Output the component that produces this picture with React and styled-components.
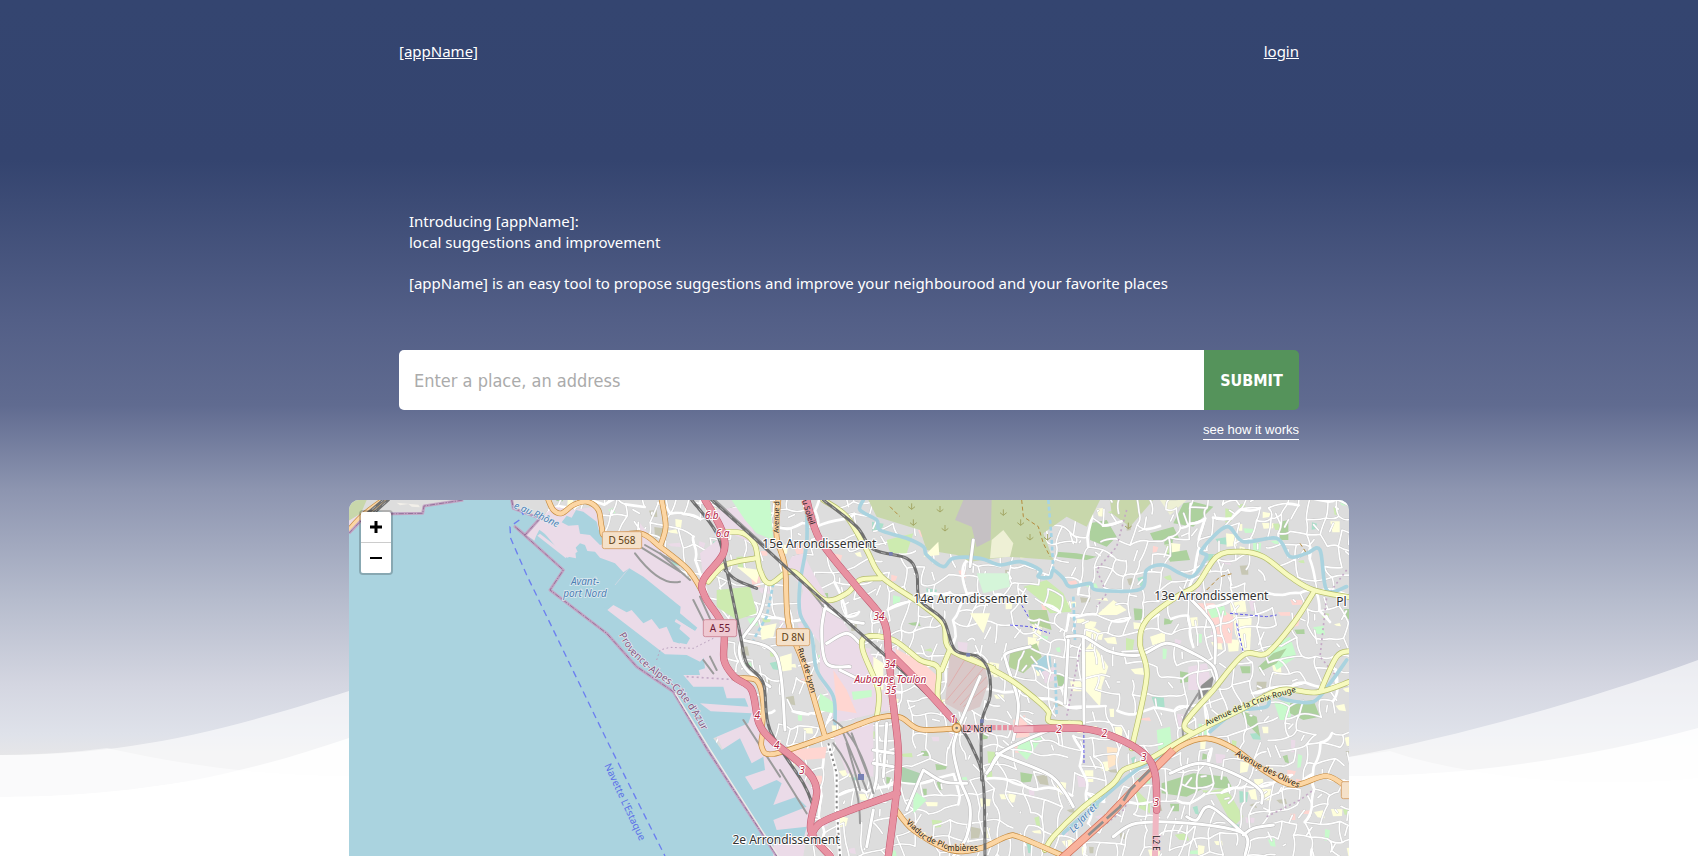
import React from "react";
import styled, { createGlobalStyle } from "styled-components";

const GlobalStyle = createGlobalStyle`
  *, *::before, *::after { box-sizing: border-box; }
  body { margin: 0; background: #fff; }
`;

const sans = `"Noto Sans", "Open Sans", sans-serif`;

const Page = styled.div`
  position: relative;
  display: flex;
  flex-direction: column;
  height: 100vh;
  min-height: 620px;
  overflow: hidden;
  color: #fff;
  font: 15px/21px ${sans};
  background: linear-gradient(
    #344570 0, #34446f 160px, #535f87 320px, #606b90 405px, #8d95b0 490px,
    #b6bccd 600px, #d4d6e1 685px, #dfe2ea 735px, #e6e6e8 755px
  );
`;

const Waves = styled.svg`
  position: absolute;
  inset: 0;
  width: 100%;
  height: 100%;
`;

const Content = styled.div`
  position: relative;
  display: flex;
  flex-direction: column;
  width: 100%;
  max-width: 900px;
  margin: 0 auto;
`;

const Nav = styled.nav`
  display: flex;
  justify-content: space-between;
  padding: 41px 0;
`;

const NavLink = styled.a`
  color: #fff;
  text-decoration: underline;
`;

const Intro = styled.section`
  padding: 108px 10px 56px;
`;

const IntroText = styled.p`
  margin: 0 0 ${(p) => (p.$spaced ? "20px" : "0")};
`;

const SearchForm = styled.form`
  display: flex;
  height: 60px;
  border-radius: 5px;
  overflow: hidden;
`;

const SearchInput = styled.input`
  flex: 1;
  min-width: 0;
  padding: 0 15px;
  border: 0;
  outline: 0;
  background: #fff;
  color: #333;
  font: 18px "DejaVu Sans Condensed", "Open Sans", sans-serif;
  &::placeholder { color: #ababab; opacity: 1; }
`;

const SubmitButton = styled.button`
  width: 95px;
  padding: 0;
  border: 0;
  background: #55935b;
  color: #fff;
  font: bold 16px "DejaVu Sans Condensed", "Open Sans", sans-serif;
`;

const HelpLink = styled.a`
  align-self: flex-end;
  margin: 10px 0 60px;
  border-bottom: 1px solid #fff;
  color: #fff;
  font: 13px/19px "Liberation Sans", Arial, sans-serif;
  text-decoration: none;
`;

const MapFrame = styled.section`
  position: relative;
  flex: 1;
  min-height: 0;
  width: 100%;
  max-width: 1000px;
  margin: 0 auto;
  border-radius: 10px 10px 0 0;
  overflow: hidden;
  background: #aad3df;
`;

const MapDrawing = styled.svg`
  display: block;
  width: 100%;
  height: 100%;
  font-family: "Noto Sans", "Open Sans", sans-serif;
`;

const ZoomControl = styled.div`
  position: absolute;
  top: 10px;
  left: 10px;
  display: flex;
  flex-direction: column;
  border: 2px solid rgba(0, 0, 0, 0.2);
  border-radius: 4px;
  background-clip: padding-box;
`;

const ZoomButton = styled.button`
  display: grid;
  place-items: center;
  width: 30px;
  height: ${(p) => (p.$divided ? "31px" : "30px")};
  padding: 0;
  border: 0;
  border-bottom: ${(p) => (p.$divided ? "1px solid #ccc" : "0")};
  border-radius: ${(p) => (p.$divided ? "2px 2px 0 0" : "0 0 2px 2px")};
  background: #fff;
`;

/* ---------- map data: three sheets side by side, 3 units per pixel ---------- */

const SHEET = { west: 0, mid: 960, east: 1920 };

function seeded(seed) {
  let s = seed;
  return () => {
    s = (s * 1664525 + 1013904223) % 4294967296;
    return s / 4294967296;
  };
}

function buildStreets() {
  const rand = seeded(42);
  const cell = 46;
  const cols = 56;
  const rows = 26;
  const pts = [];
  for (let r = 0; r <= rows; r++) {
    const row = [];
    for (let c = 0; c <= cols; c++) {
      const x = 600 + c * cell;
      const y = r * cell - 20;
      row.push([
        Math.round(x + 40 * Math.sin(y / 140 + x / 300) + (rand() - 0.5) * 26),
        Math.round(y + 40 * Math.sin(x / 170) + (rand() - 0.5) * 26),
      ]);
    }
    pts.push(row);
  }
  let thin = "";
  let wide = "";
  const patches = [];
  const colors = ["#ffffdc", "#ffffdc", "#ffffdc", "#cdebb0", "#c8facc", "#add19e", "#ffd6d1", "#aae0cb", "#c7c7b4", "#ebdbe8"];
  const edge = (a, b) => {
    const mx = Math.round((a[0] + b[0]) / 2 + (rand() - 0.5) * 24);
    const my = Math.round((a[1] + b[1]) / 2 + (rand() - 0.5) * 24);
    return `M${a[0]} ${a[1]}Q${mx} ${my} ${b[0]} ${b[1]}`;
  };
  for (let r = 0; r < rows; r++) {
    for (let c = 0; c < cols; c++) {
      const p = pts[r][c];
      if (rand() < 0.62) thin += edge(p, pts[r][c + 1]);
      if (rand() < 0.62) thin += edge(p, pts[r + 1][c]);
      if (r % 6 === 2 && rand() < 0.6) wide += edge(p, pts[r][c + 1]);
      if (c % 8 === 3 && rand() < 0.6) wide += edge(p, pts[r + 1][c]);
      if (rand() < 0.3) {
        const a = p[0] + 22;
        const b = p[1] + 16;
        thin += `M${a} ${b}l${Math.round(rand() * 40 - 20)} ${Math.round(rand() * 40)}`;
      }
      if (rand() < 0.3) {
        const w = 12 + rand() * 26;
        const h = 10 + rand() * 26;
        const k = rand() * 14 - 7;
        const x = p[0] + 6 + rand() * 12;
        const y = p[1] + 6 + rand() * 12;
        patches.push({
          d: `M${x | 0} ${y | 0}l${w | 0} ${k | 0}l${-k | 0} ${h | 0}l${(-w * 0.8) | 0} ${(k * 0.6) | 0}Z`,
          fill: colors[Math.floor(rand() * colors.length)],
        });
      }
    }
  }
  return { thin, wide, patches };
}

const STREETS = buildStreets();

/* Rounds the corners of a polyline path into smooth curves. */
function smooth(d) {
  if (/[QHV]/.test(d)) return d;
  return d
    .split("M")
    .filter(Boolean)
    .map((part) => {
      const p = part.split("L").map((s) => s.trim().split(" ").map(Number));
      let out = `M${p[0][0]} ${p[0][1]}`;
      for (let i = 0; i < p.length - 1; i++) {
        const a = p[i - 1] || p[i];
        const b = p[i];
        const c = p[i + 1];
        const e = p[i + 2] || c;
        out += `C${b[0] + (c[0] - a[0]) / 6} ${b[1] + (c[1] - a[1]) / 6} ${c[0] - (e[0] - b[0]) / 6} ${c[1] - (e[1] - b[1]) / 6} ${c[0]} ${c[1]}`;
      }
      return out;
    })
    .join("");
}

const SEA =
  "M27 130L60 95L100 62L130 66L250 68L250 48L300 42L360 30L515 30L518 55L560 66L600 85L560 130L590 160L675 205L680 196L600 132L615 118L700 170L703 190L715 195L726 172L745 160L780 195L830 215L870 235L940 280L1020 350L1035 350L1060 375L1075 405L1065 425L1000 395L1000 440L1020 460L1010 490L1090 490L1095 535L1030 555L1060 590L1150 590L1160 625L1215 625L1225 650L1080 640L1112 664L1235 670L1225 700L1120 745L1145 780L1200 745L1235 820L1270 800L1275 840L1215 860L1240 900L1310 870L1325 880L1300 945L1370 920L1400 950L1300 990L1310 1020L1400 1010L1390 1050L1300 1060L1300 1098L27 1098Z";

const AREAS = [
  ["west", "#c8d7ab", "M27 30H80L62 72L27 92Z"],
  ["west", "#ebdbe8", "M27 92L60 72L70 88L27 130Z"],
  ["west", "#f2efe9", "M170 38L235 44L240 52L215 50L205 42L180 46Z"],
  ["west", "#ebdbe8", "M595 92L640 50L700 60L760 50L800 130L900 180L1060 270L1200 600L1080 700L980 420L870 235L740 160L650 130L560 132Z"],
  ["mid", "#ebdbe8", "M-60 100L60 250L120 310L190 420L190 520L290 620L290 700L460 900L430 1098L340 1098L180 760L60 560L-60 280Z"],
  ["mid", "#ebdbe8", "M160 60L250 50L300 170L190 120ZM120 190L185 140L190 190L130 260Z"],
  ["mid", "#ebdbe8", "M395 200L430 190L460 250L500 320L580 440L660 520L690 660L520 700L510 620L480 570L480 460L410 370L430 300L380 230Z"],
  ["mid", "#ebdbe8", "M520 740L640 700L640 860L560 850Z"],
  ["mid", "#c8facc", "M215 30H330L340 150L290 130L255 90ZM480 610L525 640L520 670L475 660Z"],
  ["mid", "#c8d7ab", "M625 30H1320L1280 110L1220 80L1150 130L1180 210L1040 200L930 215L890 195L800 180L780 120L650 80Z"],
  ["mid", "#c5c0c3", "M910 30H995L992 150L950 172L935 110L885 90Z"],
  ["mid", "#eef0d5", "M1030 120L1060 160L1050 200L990 205L995 150Z"],
  ["mid", "#cdebb0", "M170 300L270 290L290 370L230 390L170 350ZM680 150L760 130L740 190L690 190Z"],
  ["mid", "#ffffdc", "M790 200L835 155L838 195ZM230 230L300 240L290 280ZM300 410L350 400L340 440L305 450ZM930 370L990 370L970 430Z"],
  ["mid", "#ffffdc", "M360 500L395 490L395 540L360 545ZM640 500L670 520L670 600L640 590Z"],
  ["mid", "#ffd6d1", "M705 475L790 520L835 560L830 630L715 520ZM520 540L560 600L590 670L530 660Z"],
  ["mid", "#d9c8c8", "M870 490L970 508L985 580L960 650L910 670L855 640Z"],
  ["mid", "#ffd6d1", "M385 780L500 770L495 805L430 810Z"],
  ["mid", "#add1ae", "M725 830L780 850L770 880L725 875Z"],
  ["mid", "#c8facc", "M575 605L635 600L635 620L580 630ZM760 900L800 930L760 970Z"],
  ["mid", "#d5f5d9", "M950 250L1045 250L1050 290L970 310Z"],
  ["east", "#add19e", "M610 40L640 35L700 50L640 110L580 100ZM330 100L380 90L410 140L380 170L330 150ZM510 130L580 110L600 150L520 150ZM560 190L620 180L630 210L570 215Z"],
  ["east", "#c8d7ab", "M390 30L520 30L450 110L395 70Z"],
  ["east", "#eef0d5", "M540 30L620 30L570 75ZM60 150L75 120L105 155L70 200L35 205Z"],
  ["east", "#add19e", "M230 185L290 190L350 200L320 210L230 200ZM900 95L925 90L925 150L900 150Z"],
  ["east", "#cdebb0", "M130 290L200 270L250 310L275 365L210 370L180 330Z"],
  ["east", "#b5d29b", "M145 360L200 360L215 420L150 400ZM90 490L170 460L185 500L130 550L85 530Z"],
  ["east", "#aad3df", "M155 525L210 485L215 530L180 550Z"],
  ["east", "#ebdbe8", "M185 545L225 530L225 570L195 580ZM625 530L680 520L690 560L660 600L625 600Z"],
  ["east", "#ffffdc", "M315 395L370 430L365 450L318 445ZM315 480L335 455L385 530L365 590L360 650L315 600ZM350 375L400 330L440 360L410 375ZM750 340L795 330L800 365L755 370ZM760 375L815 385L810 480L790 490L765 430ZM510 440L555 425L555 460L520 475Z"],
  ["east", "#ffd6d1", "M645 340L700 340L760 380L755 460L710 460L700 400ZM100 690L135 675L150 740L100 745Z"],
  ["east", "#c8facc", "M680 350L730 340L740 375L695 385ZM860 470L930 440L950 500L890 540ZM880 630L940 640L930 690L900 690ZM120 750L190 740L140 810L110 780ZM530 720L570 710L575 760L535 780Z"],
  ["east", "#add19e", "M835 530L880 490L920 475L890 520L840 545ZM930 640L1000 630L1020 680L970 690L930 670ZM545 880L640 850L740 860L760 900L680 890L620 920L545 910ZM780 660L830 680L840 740L800 700Z"],
  ["east", "#c7c7b4", "M830 575L860 575L855 615L830 600Z"],
  ["east", "#ffe6c8", "M380 770L415 775L415 820L385 835Z"],
  ["east", "#cdebb0", "M700 900L740 895L790 980L760 1010ZM470 900L510 940L510 970L470 950Z"],
  ["east", "#8f8f8f", "M655 600L665 585L703 555L695 590L670 620L655 630Z"],
];

const RIVERS = [
  ["mid", "M610 30L600 60L650 90L660 120L740 145L790 170L800 195L850 230L880 205L960 205L1020 225L1080 215L1140 240L1135 260L1170 262L1180 240L1210 265L1230 290L1290 280L1310 300L1440 298L1460 240L1510 225L1560 250L1600 258L1640 200L1625 180L1700 110L1750 155L1850 145L1890 200L1940 190L1980 180L2000 300L2060 290"],
  ["mid", "M440 60L440 160L420 280L420 370L455 440L470 540L520 620L525 700"],
  ["east", "M690 725L770 665L860 650L870 610L920 630L1000 635L1050 580L1100 510"],
  ["east", "M250 1030L350 940L470 840L585 775"],
];

const WHITE_ROADS = [
  ["mid", "M320 280L300 370L245 450L240 500L265 545L330 590M250 450L350 500L375 720M500 330L485 420L500 520L570 530M940 150L930 230M960 560L900 700M1020 790L980 850"],
  ["mid", "M640 960L620 1070M790 840L740 960M790 840L850 875L920 880M890 730L880 780L900 870L930 950L920 1040L880 1098"],
  ["mid", "M490 350L560 390L610 400M500 460L560 430L600 460M540 540L600 570M650 700L650 860L630 930M680 700L670 860M640 780L700 790M640 820L700 830"],
  ["east", "M30 840L60 790L160 740L260 700M100 750L115 640L80 520L80 490L150 470M310 440L312 700M260 440L310 440L390 485L480 495L560 460L640 490L700 530L715 590M265 450L255 640"],
  ["east", "M635 330L700 410L705 520M50 790L200 850L250 900L280 950M570 850L660 820L760 850L840 900L845 940M790 1030L690 950L650 990L620 980M790 1035L820 1015L880 1005M400 1040L470 1000L630 1000L790 1030L795 1098"],
];

const YELLOW_ROADS = [
  ["mid", "M190 125L250 130L285 165L300 240L330 280L400 245L490 328L560 310L600 270L662 265M490 30L560 80L620 180L665 260L780 340L850 400L870 478L1000 535M145 275L195 225L285 205"],
  ["mid", "M650 685L655 600L608 480L620 440L700 450L780 510L835 535L835 630L890 700M870 478L845 540"],
  ["east", "M-40 500L40 540L100 575L170 630L205 665L210 695L300 700M455 775L500 560L480 460L500 390L590 320L650 285L710 200L780 185L850 200L930 260L1000 300L1110 322"],
  ["east", "M1000 308L940 400L860 490L790 495L700 600L615 700L640 730M195 1080L220 1040L300 960L400 880L430 840L500 812L640 730L780 660L900 600L1010 607L1110 575M1022 602L1070 500L1110 483"],
];

const ORANGE_ROADS = [
  ["west", "M27 120L70 75L130 30M625 30L640 60L665 70L700 45L740 35L775 60L785 110L800 140L900 130L960 170L1045 240L1090 310M965 30L977 110L960 170"],
  ["mid", "M355 30L350 140L375 230L385 400L430 520L495 740M310 720L305 770L340 792L495 742L650 685L720 682L780 718L890 715M225 565L290 572L310 640L305 720"],
  ["mid", "M705 955L760 1020L870 1080L960 1075L1040 1040L1080 1042L1210 1098"],
  ["east", "M520 840L600 770L680 745L760 775L850 840L940 885L1040 858L1110 900"],
];

const RAILS = [
  ["mid", "M155 30L300 160L420 270L680 500L880 690L940 780L970 880L975 1098"],
  ["mid", "M95 30L170 130L200 240L240 430L260 520L310 580L330 720L430 880L460 950M195 240L230 270L290 295"],
  ["mid", "M490 30L590 110L640 178L740 205L770 250L780 330L850 390L885 480L955 500L985 540L990 620L965 700L965 870"],
  ["west", "M70 80L130 30M75 92L145 30"],
];

const YARDS = [
  ["west", "M885 190Q960 290 1020 275M900 170L1020 245M915 165L1020 225"],
  ["mid", "M0 190L90 270M100 330L150 430M120 320L170 430M130 510L160 550M150 500L170 540M520 690Q600 740 640 910M550 730L620 900M560 760L600 900M520 760Q600 860 600 1000M575 730L625 860M250 690L360 860M360 840L440 970"],
  ["mid", "M165 30L290 145L320 170M420 262L490 350"],
  ["east", "M613 765L610 690L655 610"],
];

const MOTORWAYS = [
  ["mid", "M135 30L185 120L190 190L130 270L135 320L190 410L192 510L225 562L275 600L297 700L340 755L430 830L470 900L452 1020L510 1098"],
  ["mid", "M440 30L480 150L590 290L670 390L685 480L697 620L715 780L710 900L685 1098M685 485L770 570L880 690M712 910L560 965L480 1000L452 1040"],
  ["east", "M110 718L300 715L400 740L490 790L525 850L530 960"],
];

const LABELS = [
  ["mid", 478, 175, "15e Arrondissement", 36, "middle"],
  ["mid", 931, 338, "14e Arrondissement", 36, "middle"],
  ["east", 694, 330, "13e Arrondissement", 36, "middle"],
  ["mid", 378, 1063, "2e Arrondissement", 36, "middle"],
  ["east", 1069, 347, "Pl", 36, "start"],
];

const EXITS = [
  [155, 88, "6.b"], [188, 142, "6.a"], [657, 391, "34"], [690, 535, "34"], [692, 613, "35"], [691, 578, "Aubagne Toulon"],
  [292, 687, "4"], [350, 777, "4"], [426, 852, "3"], [880, 700, "1"], [1197, 729, "2"], [1333, 740, "2"], [1451, 812, "3"], [1489, 949, "3"],
];

const SHIELDS = [
  ["west", 787, 125, 118, "D 568", "#f5e1c9", "#d9a873", "#5d4013"],
  ["mid", 130, 389, 100, "A 55", "#efc9d2", "#cf8c9c", "#6e1a35"],
  ["mid", 349, 416, 100, "D 8N", "#f5e1c9", "#d9a873", "#5d4013"],
  ["east", 1084, 875, 90, "D 4", "#f5e1c9", "#d9a873", "#5d4013"],
];

const STREET_NAMES = [
  ["rouge", "M2600 708L2700 660L2790 628L2900 596", "Avenue de la Croix Rouge", 24, "#222", "#f7fabf"],
  ["olives", "M2685 795L2760 838L2890 902", "Avenue des Olives", 25, "#222", "#fcd6a4"],
  ["lyon", "M1372 478L1395 540L1420 640", "Rue de Lyon", 24, "#222", "#fcd6a4"],
  ["avenue", "M1316 130L1318 31", "Avenue d", 22, "#222", "#fcd6a4"],
  ["soleil", "M1386 32L1398 70L1425 150", "u Soleil", 23, "#222", "#e892a2"],
  ["viaduc", "M1697 998L1750 1048L1830 1082L1940 1082", "Viaduc de Plombières", 24, "#222", "#fcd6a4"],
  ["paca", "M836 435L870 490L930 545L985 583L1030 630L1070 690L1110 770", "Provence-Alpes-Côte d'Azur", 30, "#7f5a80", "#e8e6f0"],
  ["ferry", "M793 826L850 950L920 1098", "Navette L'Estaque", 30, "#5b6fe8", "#aad3df"],
  ["rhone", "M520 54L560 70L690 130", "e au Rhône", 29, "#4d80b3", "#e4eef3"],
  ["jarret", "M2200 1030L2245 980L2300 925", "Le Jarret", 29, "#4d80b3", "#e4eef3"],
];

function Layer({ items, ...rest }) {
  return (
    <g fill="none" strokeLinejoin="round" strokeLinecap="round" {...rest}>
      {items.map(([sheet, d]) => (
        <path key={d} d={smooth(d)} transform={`translate(${SHEET[sheet]} 0)`} />
      ))}
    </g>
  );
}

/* Quays and basins of the northern harbour. */
function Harbour() {
  return (
    <g transform="translate(480 15)">
      <path fill="#ebdbe8" d="M72 118L120 68L210 55L290 70L305 125L420 145L600 300L660 380L660 470L600 480L480 400L300 260L200 190Z" />
      <g fill="#aad3df">
        <path d="M185 82L200 62L215 68L228 45L250 50L290 80L296 105L330 125L330 142L300 150L270 120L240 116L235 90L205 92Z" />
        <path d="M108 124L118 104L200 165L205 185L228 190L225 160L240 145L255 150L262 168L285 170L300 188L345 205L370 232L388 220L430 245L542 335L540 355L592 398L585 408L545 385L538 402L570 430L560 448L520 440L500 412L470 400L445 380L400 365L340 325L310 340L460 460L590 500L600 540L440 540L360 450L145 285L190 230L180 205L100 145Z" />
      </g>
      <g fill="#ebdbe8">
        <path d="M128 108L140 104L200 160L228 158L235 172L205 190L190 182Z" transform="translate(-2 -2)" />
        <path d="M112 122L120 116L202 180L198 190Z" />
        <path d="M322 345L340 330L380 352L395 345L430 385L455 372L478 402L500 395L520 440L555 450L620 480L600 500L560 480L495 478Z" />
        <path d="M528 372L584 408L582 414L524 380Z" />
      </g>
      <path d="M470 495L480 465L510 457L580 460L640 430" fill="none" stroke="#b9a0bd" strokeWidth="3" strokeDasharray="5 8" />
      <path d="M385 222L345 270" fill="none" stroke="#dcd8e4" strokeWidth="2" />
    </g>
  );
}

function CityMap() {
  return (
    <MapDrawing viewBox="27 30 3000 1068" preserveAspectRatio="xMinYMin slice" role="img" aria-label="Map of Marseille">
      <rect x="27" y="30" width="3000" height="3000" fill="#dddddd" />
      {STREETS.patches.map((p) => <path key={p.d} d={p.d} fill={p.fill} />)}
      {AREAS.filter((a) => a[0] === "east").map(([s, fill, d]) => (
        <path key={d} d={d} fill={fill} transform={`translate(${SHEET[s]} 0)`} />
      ))}
      <g fill="none" strokeLinecap="round">
        <path d={STREETS.thin} stroke="#c4c4c4" strokeWidth="7" />
        <path d={STREETS.thin} stroke="#fff" strokeWidth="5" />
        <path d={STREETS.wide} stroke="#fff" strokeWidth="8" />
      </g>
      {AREAS.filter((a) => a[0] !== "east").map(([s, fill, d]) => (
        <path key={d} d={d} fill={fill} transform={`translate(${SHEET[s]} 0)`} />
      ))}
      <path d={SEA} fill="#aad3df" />
      <Harbour />

      {/* scrub marks and footpaths in the hills */}
      <g fill="none" stroke="#a3a765" strokeWidth="3">
        {[[1715, 50], [1720, 98], [1800, 58], [1990, 68], [2042, 98], [2070, 142], [2122, 142], [2365, 108], [1815, 115]].map(([x, y]) => (
          <path key={x} d={`M${x - 10} ${y}L${x} ${y + 8}L${x + 10} ${y}M${x} ${y - 10}V${y + 8}`} />
        ))}
        <path d="M2045 30L2050 80L2095 110L2110 160L2130 200M1650 50L1680 80M2880 160L2900 190M2600 300L2640 260L2680 250" strokeDasharray="12 8" stroke="#b58b3e" />
      </g>
      <path d="M2125 30L2135 150L2140 240M2200 320L2205 450M1300 280L1280 380L1240 450M2145 520L2150 680" fill="none" stroke="#a5d4e5" strokeWidth="8" strokeDasharray="12 8" />
      <path d="M2360 60L2330 170L2270 240L2300 310L2270 350M3020 240L2960 320L2940 500L2990 560M2220 480L2180 680M2300 1000L2350 960L2400 870M2780 980L2880 930L2920 900M1040 560L1200 570" fill="none" stroke="#c4a9c6" strokeWidth="5" strokeDasharray="6 9" />
      <path d="M2230 450L2232 820M2010 405L2070 410L2130 430M2065 380L2045 345M2670 370L2780 380L2810 375M2690 400L2710 490" fill="none" stroke="#5a55e6" strokeWidth="3" strokeDasharray="9 6" />
      <g fill="none" stroke="#e3a09e" strokeWidth="2">
        <path d="M1820 630L1920 510M1840 640L1935 530M1860 645L1940 560M1825 590L1880 500M1870 650L1940 590" />
      </g>

      <Layer items={RIVERS} stroke="#aad3df" strokeWidth="11" />
      <Layer items={WHITE_ROADS} stroke="#b9b9b9" strokeWidth="12" />
      <Layer items={WHITE_ROADS} stroke="#fff" strokeWidth="9" />
      <Layer items={YARDS} stroke="#9b9b9b" strokeWidth="6" />
      <path d="M1465 760L1490 850L1490 950L1500 1098" fill="none" stroke="#fff" strokeWidth="12" />
      <path d="M1465 760L1490 850L1490 950L1500 1098" fill="none" stroke="#888" strokeWidth="6" strokeDasharray="7 9" />
      <Layer items={YELLOW_ROADS} stroke="#b5bd6c" strokeWidth="17" />
      <Layer items={YELLOW_ROADS} stroke="#f7fabf" strokeWidth="13" />
      <Layer items={ORANGE_ROADS} stroke="#c58b40" strokeWidth="17" />
      <Layer items={ORANGE_ROADS} stroke="#fcd6a4" strokeWidth="13" />

      <g fill="none" strokeLinejoin="round">
        <path d="M2160 1110L2300 985L2390 890L2440 840L2500 780" stroke="#cf6a53" strokeWidth="24" />
        <path d="M2160 1110L2300 985L2390 890L2440 840L2500 780" stroke="#f9b29c" strokeWidth="20" />
        <path d="M2245 1035L2340 950L2370 900L2430 840" stroke="#8f8f8f" strokeWidth="8" strokeDasharray="60 14" />
        <path d="M1870 713H2030" stroke="#e892a2" strokeWidth="16" strokeDasharray="12 5" />
        <path d="M2448 960L2445 1098" stroke="#f0b7c2" strokeWidth="18" />
      </g>

      <Layer items={RAILS} stroke="#707070" strokeWidth="9" />
      <Layer items={RAILS} stroke="#c9c9c9" strokeWidth="2" strokeDasharray="14 20" strokeLinecap="butt" />
      <Layer items={MOTORWAYS} stroke="#c0576f" strokeWidth="22" />
      <Layer items={MOTORWAYS} stroke="#e892a2" strokeWidth="19" />
      <path d="M2020 718H2080" stroke="#f0b7c2" strokeWidth="18" />
      <circle cx="1850" cy="714" r="13" fill="#fcd6a4" stroke="#c58b40" strokeWidth="4" />
      <circle cx="1850" cy="714" r="4" fill="#777" />
      <g fill="#7880b4">
        <rect x="1554" y="852" width="18" height="18" />
        <rect x="1647" y="186" width="11" height="11" />
        <rect x="1879" y="489" width="11" height="11" />
        <rect x="1920" y="688" width="11" height="11" />
      </g>

      {/* administrative boundary along the breakwater */}
      <g fill="none" strokeLinejoin="round">
        <path d="M27 130L60 95L120 72L248 70L252 48L370 30M515 30L520 55L600 85L555 135L525 110L670 240L630 300L800 430L890 530L1000 605L1100 775L1310 1098" stroke="#c3a5c4" strokeWidth="9" />
        <path d="M27 130L60 95L120 72L248 70L252 48L370 30M515 30L520 55L600 85L555 135L525 110L670 240L630 300L800 430L890 530L1000 605L1100 775L1310 1098" stroke="#95729a" strokeWidth="3" strokeDasharray="16 4 4 4" />
        <path d="M545 65L550 75M538 90L510 110L512 145L560 255L800 750L975 1098" stroke="#6c7ff0" strokeWidth="4" strokeDasharray="20 14" />
        <path d="M1005 608L1110 778L1315 1098" stroke="#efece8" strokeWidth="4" />
      </g>

      {SHIELDS.map(([sheet, x, y, w, text, fill, stroke, color]) => (
        <g key={text} transform={`translate(${SHEET[sheet] + x} ${y})`}>
          <rect width={w} height="51" rx="6" fill={fill} stroke={stroke} strokeWidth="3" />
          <text x={w / 2} y="36" textAnchor="middle" fontSize="30" fill={color}>{text}</text>
        </g>
      ))}

      {STREET_NAMES.map(([id, d, text, size, fill, halo]) => (
        <g key={id}>
          <path id={`street-${id}`} d={d} fill="none" />
          <text
            fontSize={size}
            fill={fill}
            stroke={halo}
            strokeWidth="4"
            paintOrder="stroke"
            fontStyle={id === "rhone" || id === "jarret" ? "italic" : "normal"}
          >
            <textPath href={`#street-${id}`}>{text}</textPath>
          </text>
        </g>
      ))}

      <g fontSize="30" fontStyle="italic" fill="#4d80b3" stroke="#dfeaf0" strokeWidth="5" paintOrder="stroke" textAnchor="middle">
        <text x="735" y="285">Avant-</text>
        <text x="735" y="321">port Nord</text>
      </g>
      <g fontSize="30" fontStyle="italic" fill="#b0203e" stroke="#fff" strokeWidth="6" paintOrder="stroke" textAnchor="middle">
        {EXITS.map(([x, y, text]) => (
          <text key={`${x}-${y}`} x={x + 960} y={y}>{text}</text>
        ))}
      </g>
      <text x="1912" y="726" textAnchor="middle" fontSize="24" fill="#222" stroke="#f3cdd5" strokeWidth="5" paintOrder="stroke">L2 Nord</text>
      <text transform="translate(2438 1036) rotate(90)" fontSize="24" fill="#222" stroke="#f3cdd5" strokeWidth="4" paintOrder="stroke">L2 E</text>
      <g fill="#333" stroke="#fff" strokeWidth="6" paintOrder="stroke">
        {LABELS.map(([sheet, x, y, text, size, anchor]) => (
          <text key={text} x={SHEET[sheet] + x} y={y} fontSize={size} textAnchor={anchor}>{text}</text>
        ))}
      </g>
    </MapDrawing>
  );
}

function BackgroundWaves() {
  return (
    <Waves viewBox="0 0 1698 856" preserveAspectRatio="none" aria-hidden="true">
      <g fill="#fff">
        <path fillOpacity="0.6" d="M0 755C130 755 220 732 349 691C600 610 760 790 1000 790C1120 790 1250 776 1349 757C1450 738 1580 703 1698 660V856H0Z" />
        <path fillOpacity="0.5" d="M0 755Q55 755 107 748C180 764 250 775 349 776C700 780 1000 800 1349 757L1390 751C1450 772 1550 783 1610 783Q1660 782 1698 778V856H0Z" />
        <path fillOpacity="0.84" d="M0 797C140 797 240 775 349 738C620 650 900 776 1349 776C1470 776 1590 757 1698 728V856H0Z" />
        <path d="M0 797C90 797 170 786 245 771Q300 776 349 776H1349Q1410 776 1467 771C1540 783 1630 786 1698 778V856H0Z" />
      </g>
    </Waves>
  );
}

export default function App() {
  return (
    <>
      <GlobalStyle />
      <Page>
        <BackgroundWaves />
        <Content>
          <Nav>
            <NavLink href="#home">[appName]</NavLink>
            <NavLink href="#login">login</NavLink>
          </Nav>
          <Intro>
            <IntroText $spaced>
              Introducing [appName]:<br />
              local suggestions and improvement
            </IntroText>
            <IntroText>
              [appName] is an easy tool to propose suggestions and improve your neighbourood and your favorite places
            </IntroText>
          </Intro>
          <SearchForm onSubmit={(e) => e.preventDefault()}>
            <SearchInput type="text" aria-label="Place or address" placeholder="Enter a place, an address" />
            <SubmitButton type="submit">SUBMIT</SubmitButton>
          </SearchForm>
          <HelpLink href="#how">see how it works</HelpLink>
        </Content>
        <MapFrame aria-label="Map">
          <CityMap />
          <ZoomControl>
            <ZoomButton type="button" aria-label="Zoom in" $divided>
              <svg width="14" height="14" viewBox="0 0 14 14" aria-hidden="true">
                <path d="M1 7H13M7 1V13" stroke="#000" strokeWidth="3" />
              </svg>
            </ZoomButton>
            <ZoomButton type="button" aria-label="Zoom out">
              <svg width="14" height="14" viewBox="0 0 14 14" aria-hidden="true">
                <path d="M1 7H13" stroke="#000" strokeWidth="2" />
              </svg>
            </ZoomButton>
          </ZoomControl>
        </MapFrame>
      </Page>
    </>
  );
}
